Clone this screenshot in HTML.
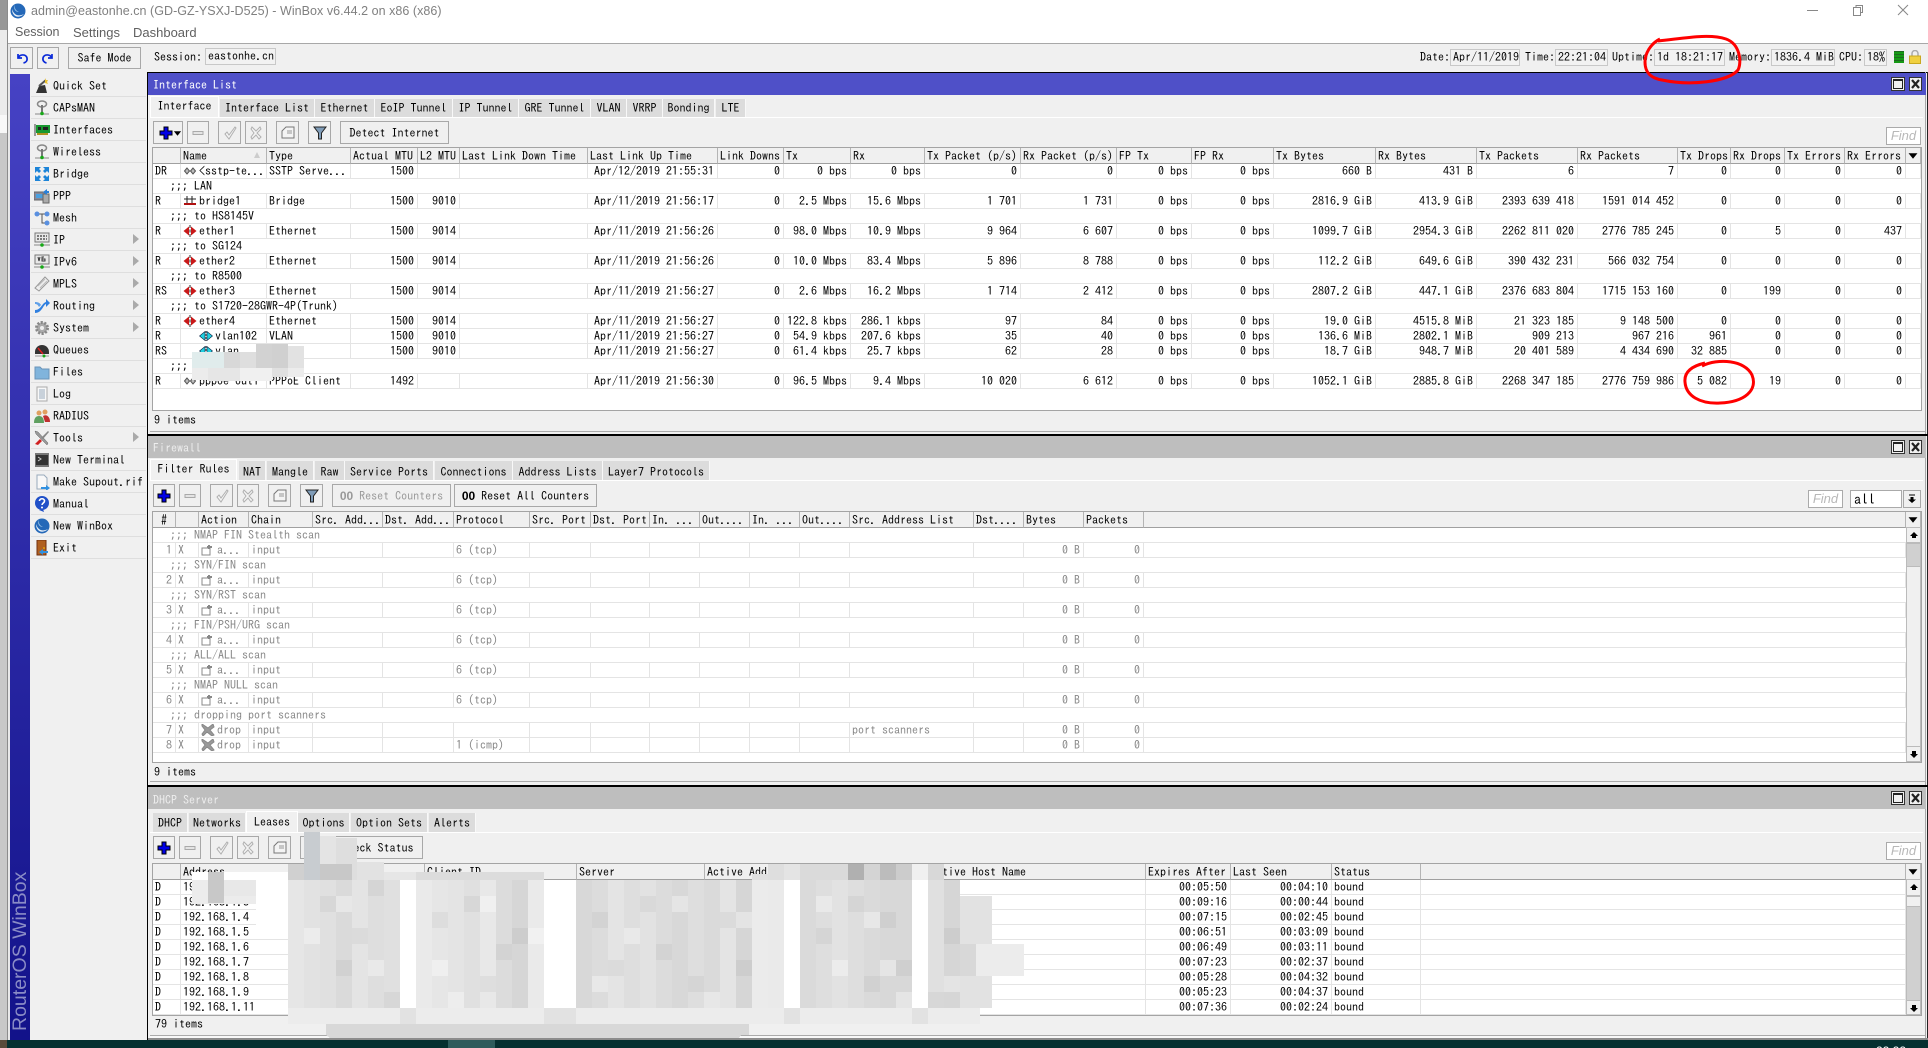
<!DOCTYPE html>
<html><head><meta charset="utf-8"><title>WinBox</title>
<style>
html,body{margin:0;padding:0;width:1928px;height:1048px;overflow:hidden}
body{position:relative;background:#053030;font:12px/14px IPAGothic,"Liberation Mono",monospace;color:#000}
#root{position:absolute;left:0;top:0;width:1928px;height:1048px;overflow:hidden}
div,span.a,svg.a{position:absolute}
.a{position:absolute}
.bg{background:#f0f0f0}
.tt{color:#fff;left:153px;line-height:14px;white-space:pre}
.tb{left:148px;width:1778px;height:22px}
.tab{position:absolute;background:#dcdcdc;height:19px;line-height:19px;text-align:center;white-space:pre;border-right:1px solid #f8f8f8;box-sizing:border-box}
.tab.on{background:#f0f0f0;border:1px solid #fff;border-bottom:0;height:22px;line-height:19px}
.fw .tab{line-height:22px}
.fw .tab.on{line-height:19px}
.dh .tab{line-height:21px}
.dh .tab.on{line-height:20px}
.ln{left:150px;width:1773px;height:1px;background:#fff}
.b{position:absolute;box-sizing:border-box;border:1px solid #a8a8a8;background:#f0f0f0;text-align:center;line-height:23px;white-space:pre;height:23px}
.b svg{position:absolute;left:50%;top:50%;width:14px;height:14px;margin:-7px 0 0 -7px}
.bx{position:absolute;box-sizing:border-box;border:1px solid #c8c8c8;height:17px;line-height:15px;background:#f2f2f2;white-space:pre;padding-left:2px}
.l{position:absolute;white-space:pre;line-height:14px}
.fr{position:absolute;left:152px;width:1770px;box-sizing:border-box;border:1px solid #a4a4a4;background:#fff;overflow:hidden}
table{border-collapse:separate;border-spacing:0;table-layout:fixed;position:absolute;left:0;top:0}
th,td{box-sizing:border-box;padding:0 2px;height:15px;line-height:14px;font-weight:normal;text-align:left;white-space:pre;overflow:hidden;border-right:1px solid #e4e4e4;border-bottom:1px solid #e4e4e4}
th{height:16px;background:#f0f0f0;border-right:1px solid #b4b4b4;border-bottom:1px solid #a0a0a0;position:relative}
td{padding-right:3px}
td.c{text-align:left!important;padding-left:17px;border-right:0}
td svg{width:14px;height:12px;vertical-align:-2px;margin-right:2px}
#t1 td:nth-child(n+4){text-align:right}
#t2 td{color:#888}
#t2 td:nth-child(1),#t2 td:nth-child(16),#t2 td:nth-child(17){text-align:right}
#t3 td:nth-child(9),#t3 td:nth-child(10){text-align:right}
.n2{padding-left:18px}
.find{position:absolute;box-sizing:border-box;border:1px solid #aaa;background:#fff;height:18px;color:#b8b8b8;font:italic 13px/16px "Liberation Sans",sans-serif;text-align:center}
.w{position:absolute;box-sizing:border-box;width:14px;height:14px;border:1px solid #333;background:#f0f0f0}
.w.x{left:1909px;width:13px}
.w.mx{left:1891px}
.w.mx i{position:absolute;left:1px;top:1px;right:1px;bottom:1px;border:1px solid #222;border-top-width:2px}
.w.x svg{position:absolute;left:1px;top:1px;width:9px;height:10px}
.m{position:relative;box-sizing:border-box;width:115px;height:22px;left:1px;border-bottom:1px solid #dedede}
.m svg{position:absolute;left:3px;top:3px;width:16px;height:16px}
.m span{position:absolute;left:22px;top:4px;white-space:pre;line-height:14px}
.m u{position:absolute;left:102px;top:5px;width:0;height:0;border-left:6px solid #aaa;border-top:5px solid transparent;border-bottom:5px solid transparent}
.sb{position:absolute;left:1906px;width:15px;box-sizing:border-box;background:#f0f0f0;border:1px solid #bbb}
.sb svg{position:absolute;left:2px;top:3px;width:10px;height:9px}
</style></head><body><div id="root">
<svg width="0" height="0" style="position:absolute">
<defs>
<symbol id="plus" viewBox="0 0 14 14"><path d="M5 1h4v4h4v4H9v4H5V9H1V5h4z" fill="#0000e6" stroke="#000" stroke-width="1"/></symbol>
<symbol id="minus" viewBox="0 0 14 14"><rect x="2" y="5.5" width="10" height="3" fill="#e4e4e4" stroke="#aaa"/></symbol>
<symbol id="chk" viewBox="0 0 14 14"><path d="M2 8l2-2 2 3 6-8 1 1-7 11z" fill="#f4f4f4" stroke="#b0b0b0"/></symbol>
<symbol id="xx" viewBox="0 0 14 14"><path d="M3 1l4 4 4-4 1 2-4 4 4 4-2 2-3-4-4 4-1-2 3-4-3-4z" fill="#f4f4f4" stroke="#b0b0b0"/></symbol>
<symbol id="note" viewBox="0 0 14 14"><path d="M1 5l4-4h8v11H1z" fill="#f4f4f4" stroke="#777"/><path d="M6 5h5M6 7h5" stroke="#999"/></symbol>
<symbol id="fil" viewBox="0 0 14 14"><path d="M1 1h12L8.500 7v6h-3V7z" fill="#7f9cb8" stroke="#222"/></symbol>
<symbol id="eth" viewBox="0 0 14 12"><path d="M6 1.500L.5 6 6 10.500zM8 1.500L13.500 6 8 10.500z" fill="#c81818"/><path d="M7 0v3M7 4.500v3M7 9v3" stroke="#222"/></symbol>
<symbol id="gry" viewBox="0 0 14 12"><path d="M4 3L1.500 6 4 9l2.500-3zM10 3L7.500 6 10 9l2.500-3z" fill="#bbb" stroke="#555"/></symbol>
<symbol id="vl" viewBox="0 0 14 12"><path d="M6 1.500L.5 6 6 10.500zM8 1.500L13.500 6 8 10.500z" fill="#20d0e0" stroke="#124" stroke-width=".6"/><path d="M7 1v10" stroke="#444" stroke-dasharray="2 1"/></symbol>
<symbol id="br" viewBox="0 0 14 12"><path d="M1 4h12M4 1v7M9 1v7" stroke="#222" fill="none"/><path d="M1 9h12" stroke="#b01010" stroke-width="2"/></symbol>
<symbol id="acc" viewBox="0 0 14 12"><path d="M1 4h8v7H1z" fill="#fff" stroke="#888"/><path d="M8 5V1M6 3h5" stroke="#888" stroke-width="2"/></symbol>
<symbol id="drp" viewBox="0 0 14 12"><path d="M1 0l6 4 5-4 1 3-4 3 4 5-2 1-5-4-4 4-1-2 3-4-3-4z" fill="#999" stroke="#888"/></symbol>
<symbol id="qs" viewBox="0 0 16 16"><path d="M2 15l3-7 6-1 2 8z" fill="#333"/><path d="M5 8l7-6" stroke="#555" stroke-width="2"/><path d="M11 0l1 2 2 0-1 2 1 2-3-1z" fill="#e8c030"/></symbol>
<symbol id="ant" viewBox="0 0 16 16"><ellipse cx="8" cy="4" rx="4.500" ry="3" fill="none" stroke="#888" stroke-width="1.500"/><path d="M8 5v7" stroke="#777" stroke-width="2"/><path d="M1 14h14" stroke="#888"/><circle cx="8" cy="13.500" r="1.800" fill="#18a818"/></symbol>
<symbol id="if" viewBox="0 0 16 16"><rect x="0" y="2" width="2" height="12" fill="#999"/><rect x="2" y="3" width="14" height="8" fill="#189830"/><path d="M4 5h3v3H4zM9 5h5v3H9z" fill="#222"/><path d="M3 11h11v2H3z" fill="#b09020"/></symbol>
<symbol id="brg" viewBox="0 0 16 16"><path d="M1 1h6L5 3l2 2-2 2-2-2-2 2zM15 1H9l2 2-2 2 2 2 2-2 2 2zM1 15h6l-2-2 2-2-2-2-2 2-2-2zM15 15H9l2-2-2-2 2-2 2 2 2-2z" fill="#1c84d8"/></symbol>
<symbol id="ppp" viewBox="0 0 16 16"><rect x="0" y="4" width="11" height="8" fill="#889" stroke="#666"/><rect x="2" y="6" width="7" height="4" fill="#4aa0e0"/><rect x="9" y="6" width="6" height="9" fill="#aaa" stroke="#666"/><path d="M9 4l4-3v2h2v2h-2v2z" fill="#2a80d8"/></symbol>
<symbol id="mesh" viewBox="0 0 16 16"><path d="M3 4h9M8 4v9h4" stroke="#555" fill="none"/><circle cx="3" cy="4" r="2.500" fill="#5a90e0"/><circle cx="13" cy="4" r="2.500" fill="#5a90e0"/><circle cx="13" cy="13" r="2.500" fill="#5a90e0"/></symbol>
<symbol id="ip" viewBox="0 0 16 16"><rect x="1" y="1" width="14" height="9" fill="#e8e8e8" stroke="#777"/><path d="M3 4h10M3 7h10" stroke="#555" stroke-width="1.500" stroke-dasharray="2 1"/><path d="M0 13h16" stroke="#888"/><circle cx="8" cy="13" r="1.800" fill="#18a818"/></symbol>
<symbol id="ip6" viewBox="0 0 16 16"><rect x="1" y="1" width="14" height="9" fill="#e8e8e8" stroke="#777"/><path d="M4 3l1 4 1-4M10 3H8v4h3V5H8" stroke="#333" fill="none"/><path d="M0 13h16" stroke="#888"/><circle cx="8" cy="13" r="1.800" fill="#18a818"/></symbol>
<symbol id="mpls" viewBox="0 0 16 16"><path d="M1 12L11 1l4 4L5 15z" fill="#eee" stroke="#999"/><path d="M4 10l7-7M6 12l7-7" stroke="#bbb"/></symbol>
<symbol id="rt" viewBox="0 0 16 16"><path d="M1 12c6 0 7-7 11-8V1l4 4-4 4V6c-3 1-4 9-11 9z" fill="#3080e0"/><path d="M1 4c3 0 5 1 6 3l-2 2C4 7 3 6 1 6z" fill="#60a0e8"/></symbol>
<symbol id="sys" viewBox="0 0 16 16"><circle cx="8" cy="8" r="5.500" fill="#aaa" stroke="#888" stroke-width="3" stroke-dasharray="2 1.500"/><circle cx="8" cy="8" r="2" fill="#eee"/></symbol>
<symbol id="q" viewBox="0 0 16 16"><path d="M1 10a7 7 0 0 1 14 0v2H1z" fill="#333"/><path d="M4 6l5 6" stroke="#e02020" stroke-width="1.500"/><path d="M1 14h14" stroke="#999"/><circle cx="10" cy="14" r="1.500" fill="#18a818"/></symbol>
<symbol id="f" viewBox="0 0 16 16"><path d="M1 3h5l2 2h7v10H1z" fill="#80b4dc" stroke="#6a94b8"/></symbol>
<symbol id="log" viewBox="0 0 16 16"><rect x="3" y="1" width="10" height="14" fill="#f8f8f8" stroke="#aaa"/><path d="M5 4h6M5 6h6M5 8h6M5 10h6M5 12h6" stroke="#9ab"/></symbol>
<symbol id="rad" viewBox="0 0 16 16"><circle cx="5" cy="5" r="2.500" fill="#e0a060"/><circle cx="11" cy="4" r="2.500" fill="#e0a060"/><path d="M0 15c0-5 2-7 5-7s5 2 5 7z" fill="#60a060"/><path d="M9 8c3-2 7 0 7 6h-5z" fill="#c03030"/></symbol>
<symbol id="tl" viewBox="0 0 16 16"><path d="M1 1l3 1 10 11-1 2L2 4z" fill="#999" stroke="#666" stroke-width=".5"/><path d="M14 1l1 1-6 7-2-1z" fill="#888"/><path d="M6 9l2 2-4 4-3-1z" fill="#d02020"/></symbol>
<symbol id="term" viewBox="0 0 16 16"><rect x="1" y="1" width="14" height="14" fill="#777"/><rect x="2" y="3" width="12" height="10" fill="#333"/><path d="M4 5l3 2-3 2" stroke="#ccc" fill="none"/></symbol>
<symbol id="sup" viewBox="0 0 16 16"><path d="M3 1h7l3 3v11H3z" fill="#f8f8f8" stroke="#9ab"/><path d="M7 13h5v-2l4 3-4 3v-2H7z" fill="#3090e0"/></symbol>
<symbol id="man" viewBox="0 0 16 16"><circle cx="8" cy="7" r="7" fill="#2050c8"/><path d="M5 14l5 2-1-3z" fill="#2050c8"/><path d="M5.500 5c0-3 5-3 5 0 0 2-2.500 2-2.500 4" stroke="#fff" stroke-width="1.600" fill="none"/><circle cx="8" cy="11.500" r="1" fill="#fff"/></symbol>
<symbol id="nw" viewBox="0 0 16 16"><circle cx="8" cy="8" r="7.500" fill="#2468b8"/><path d="M2 6c2 6 6 8 12 5-5 5-12 3-12-5z" fill="#e8f0f8"/><path d="M5 2c-1 3 1 6 4 7-4 0-6-4-4-7z" fill="#a0c8e8"/></symbol>
<symbol id="ex" viewBox="0 0 16 16"><rect x="3" y="0" width="9" height="15" fill="#b06020" stroke="#703010"/><circle cx="10" cy="8" r=".8" fill="#fc0"/><path d="M14 11H9V9l-4 3 4 3v-2h5z" fill="#3090e0"/></symbol>
<symbol id="up" viewBox="0 0 10 9"><path d="M5 1l4 4H7v2H3V5H1z" fill="#000"/></symbol>
<symbol id="dn" viewBox="0 0 10 9"><path d="M3 1h4v3h2L5 8 1 4h2z" fill="#000"/></symbol>
<symbol id="tri" viewBox="0 0 10 9"><path d="M1 2h8L5 7z" fill="#000"/></symbol>
<symbol id="cl" viewBox="0 0 9 10"><path d="M1 1l7 8M8 1L1 9" stroke="#222" stroke-width="2.200"/></symbol>
</defs></svg>

<!-- window frame -->
<div style="left:0;top:0;width:8px;height:30px;background:#989898"></div>
<div style="left:0;top:30px;width:8px;height:85px;background:#ebebeb"></div>
<div style="left:0;top:115px;width:8px;height:18px;background:#f8f8f8"></div>
<div style="left:0;top:133px;width:8px;height:907px;background:#c8c8c8"></div>
<div style="left:7px;top:0;width:1px;height:1040px;background:#8c8c8c"></div>
<div style="left:8px;top:0;width:1920px;height:43px;background:#fff"></div>
<div style="left:8px;top:43px;width:1920px;height:1px;background:#a8a8a8"></div>
<div style="left:8px;top:44px;width:1920px;height:996px;background:#f0f0f0"></div>

<svg class="a" style="left:10px;top:3px;width:16px;height:16px" viewBox="0 0 16 16"><use href="#nw"/></svg>
<div style="left:31px;top:4px;font:12.5px/15px 'Liberation Sans',sans-serif;color:#808080;white-space:pre;letter-spacing:.04px">admin@eastonhe.cn (GD-GZ-YSXJ-D525) - WinBox v6.44.2 on x86 (x86)</div>
<div style="left:15px;top:25px;font:12.5px/15px 'Liberation Sans',sans-serif;color:#606060">Session</div>
<div style="left:73px;top:25px;font:13px/15px 'Liberation Sans',sans-serif;color:#606060">Settings</div>
<div style="left:133px;top:25px;font:13px/15px 'Liberation Sans',sans-serif;color:#606060">Dashboard</div>
<svg class="a" style="left:1800px;top:0;width:128px;height:24px" viewBox="0 0 128 24"><path d="M7 10.500h11" stroke="#888"/><path d="M53.500 7.500h7v8h-7zM56 7V5.500h6.500v7H61" fill="none" stroke="#888"/><path d="M98 5l10 10M108 5L98 15" stroke="#888"/></svg>

<!-- toolbar -->
<div class="b" style="left:10px;top:47px;width:23px;height:22px"><svg viewBox="0 0 14 14"><path d="M3 3v4h4M3.500 6.500C5 3 11 3 12 7c.5 2.500-1 4.500-3.500 5" fill="none" stroke="#0a2ad8" stroke-width="1.700"/></svg></div>
<div class="b" style="left:37px;top:47px;width:22px;height:22px"><svg viewBox="0 0 14 14"><path d="M11 3v4H7M10.500 6.500C9 3 3 3 2 7c-.5 2.500 1 4.500 3.500 5" fill="none" stroke="#0a2ad8" stroke-width="1.700"/></svg></div>
<div class="b" style="left:68px;top:47px;width:73px;height:22px;line-height:20px">Safe Mode</div>
<div class="l" style="left:154px;top:50px">Session:</div>
<div class="bx" style="left:205px;top:48px;width:71px;font-size:12px">eastonhe.cn</div>

<div class="l" style="left:1420px;top:50px">Date:</div><div class="bx" style="left:1450px;top:49px;width:70px">Apr/11/2019</div>
<div class="l" style="left:1525px;top:50px">Time:</div><div class="bx" style="left:1555px;top:49px;width:53px">22:21:04</div>
<div class="l" style="left:1612px;top:50px">Uptime:</div><div class="bx" style="left:1654px;top:49px;width:71px">1d 18:21:17</div>
<div class="l" style="left:1729px;top:50px">Memory:</div><div class="bx" style="left:1771px;top:49px;width:64px">1836.4 MiB</div>
<div class="l" style="left:1839px;top:50px">CPU:</div><div class="bx" style="left:1864px;top:49px;width:23px">18%</div>
<div style="left:1894px;top:51px;width:10px;height:12px;background:repeating-linear-gradient(#1e6a1e 0 1px,#159a15 1px 3px)"></div>
<svg class="a" style="left:1909px;top:50px;width:12px;height:14px" viewBox="0 0 12 14"><path d="M3 6V3.500a3 3 0 0 1 6 0V6" fill="none" stroke="#aaa" stroke-width="1.500"/><rect x=".5" y="6" width="11" height="7.500" fill="#f0d040" stroke="#c8a820"/></svg>

<!-- sidebar -->
<div style="left:8px;top:44px;width:2px;height:996px;background:#e8e8e8"></div>
<div style="left:10px;top:74px;width:20px;height:966px;background:linear-gradient(#4642c4,#12128a)"></div>
<div style="left:9px;top:1031px;transform:rotate(-90deg);transform-origin:0 0;font:19.5px/22px 'Liberation Sans',sans-serif;color:#8a8cc6;white-space:pre">RouterOS WinBox</div>
<div style="left:30px;top:75px;width:117px;height:965px">
<div class="m"><svg><use href="#qs"/></svg><span>Quick Set</span></div>
<div class="m"><svg><use href="#ant"/></svg><span>CAPsMAN</span></div>
<div class="m"><svg><use href="#if"/></svg><span>Interfaces</span></div>
<div class="m"><svg><use href="#ant"/></svg><span>Wireless</span></div>
<div class="m"><svg><use href="#brg"/></svg><span>Bridge</span></div>
<div class="m"><svg><use href="#ppp"/></svg><span>PPP</span></div>
<div class="m"><svg><use href="#mesh"/></svg><span>Mesh</span></div>
<div class="m"><svg><use href="#ip"/></svg><span>IP</span><u></u></div>
<div class="m"><svg><use href="#ip6"/></svg><span>IPv6</span><u></u></div>
<div class="m"><svg><use href="#mpls"/></svg><span>MPLS</span><u></u></div>
<div class="m"><svg><use href="#rt"/></svg><span>Routing</span><u></u></div>
<div class="m"><svg><use href="#sys"/></svg><span>System</span><u></u></div>
<div class="m"><svg><use href="#q"/></svg><span>Queues</span></div>
<div class="m"><svg><use href="#f"/></svg><span>Files</span></div>
<div class="m"><svg><use href="#log"/></svg><span>Log</span></div>
<div class="m"><svg><use href="#rad"/></svg><span>RADIUS</span></div>
<div class="m"><svg><use href="#tl"/></svg><span>Tools</span><u></u></div>
<div class="m"><svg><use href="#term"/></svg><span>New Terminal</span></div>
<div class="m"><svg><use href="#sup"/></svg><span>Make Supout.rif</span></div>
<div class="m"><svg><use href="#man"/></svg><span>Manual</span></div>
<div class="m"><svg><use href="#nw"/></svg><span>New WinBox</span></div>
<div class="m"><svg><use href="#ex"/></svg><span>Exit</span></div>
</div>
<div style="left:147px;top:72px;width:1781px;height:1px;background:#000"></div>
<div style="left:147px;top:72px;width:1px;height:968px;background:#000"></div>
<div style="left:1927px;top:72px;width:1px;height:968px;background:#222"></div>
<div style="left:1925px;top:72px;width:1px;height:968px;background:#a8a8a8"></div>

<!-- INTERFACE LIST -->
<div class="tb" style="top:73px;background:#4f50c8"></div>
<div class="a tt" style="top:78px">Interface List</div>
<div class="w mx" style="top:77px"><i></i></div><div class="w x" style="top:77px"><svg><use href="#cl"/></svg></div>
<div class="tab on" style="left:150px;top:96px;width:69px">Interface</div>
<div class="tab" style="left:220px;top:99px;width:95px">Interface List</div>
<div class="tab" style="left:315px;top:99px;width:60px">Ethernet</div>
<div class="tab" style="left:375px;top:99px;width:78px">EoIP Tunnel</div>
<div class="tab" style="left:453px;top:99px;width:66px">IP Tunnel</div>
<div class="tab" style="left:519px;top:99px;width:72px">GRE Tunnel</div>
<div class="tab" style="left:591px;top:99px;width:36px">VLAN</div>
<div class="tab" style="left:627px;top:99px;width:36px">VRRP</div>
<div class="tab" style="left:663px;top:99px;width:52px">Bonding</div>
<div class="tab" style="left:716px;top:99px;width:30px">LTE</div>
<div class="a ln" style="top:117px"></div>
<div class="b" style="left:153px;top:121px;width:30px"><svg style="left:5px;margin:-7px 0 0 0" viewBox="0 0 14 14"><use href="#plus"/></svg><svg style="left:19px;width:9px;height:9px;margin:-4px 0 0 0" viewBox="0 0 10 9"><use href="#tri"/></svg></div>
<div class="b" style="left:187px;top:121px;width:22px"><svg><use href="#minus"/></svg></div>
<div class="b" style="left:218px;top:121px;width:23px"><svg><use href="#chk"/></svg></div>
<div class="b" style="left:245px;top:121px;width:22px"><svg><use href="#xx"/></svg></div>
<div class="b" style="left:276px;top:121px;width:23px"><svg><use href="#note"/></svg></div>
<div class="b" style="left:308px;top:121px;width:23px"><svg><use href="#fil"/></svg></div>
<div class="b" style="left:340px;top:121px;width:109px">Detect Internet</div>
<div class="find" style="left:1886px;top:127px;width:35px">Find</div>

<div class="fr" style="top:147px;height:264px">
<table id="t1" style="width:1768px"><colgroup><col style="width:28px"><col style="width:86px"><col style="width:84px"><col style="width:67px"><col style="width:42px"><col style="width:128px"><col style="width:130px"><col style="width:66px"><col style="width:67px"><col style="width:74px"><col style="width:96px"><col style="width:96px"><col style="width:75px"><col style="width:82px"><col style="width:102px"><col style="width:101px"><col style="width:101px"><col style="width:100px"><col style="width:53px"><col style="width:54px"><col style="width:60px"><col style="width:61px"><col style="width:15px"></colgroup>
<tr><th></th><th>Name<span style="position:absolute;right:6px;top:4px;width:0;height:0;border-left:3px solid transparent;border-right:3px solid transparent;border-bottom:6px solid #ccc"></span></th><th>Type</th><th>Actual MTU</th><th>L2 MTU</th><th>Last Link Down Time</th><th>Last Link Up Time</th><th>Link Downs</th><th>Tx</th><th>Rx</th><th>Tx Packet (p/s)</th><th>Rx Packet (p/s)</th><th>FP Tx</th><th>FP Rx</th><th>Tx Bytes</th><th>Rx Bytes</th><th>Tx Packets</th><th>Rx Packets</th><th>Tx Drops</th><th>Rx Drops</th><th>Tx Errors</th><th>Rx Errors</th><th style="padding:0"><svg style="width:12px;height:10px;margin:2px 0 0 1px;vertical-align:top" viewBox="0 0 10 9"><use href="#tri"/></svg></th></tr>
<tr><td>DR</td><td><svg><use href="#gry"/></svg>&lt;sstp-te...</td><td>SSTP Serve...</td><td>1500</td><td></td><td></td><td>Apr/12/2019 21:55:31</td><td>0</td><td>0 bps</td><td>0 bps</td><td>0</td><td>0</td><td>0 bps</td><td>0 bps</td><td>660 B</td><td>431 B</td><td>6</td><td>7</td><td>0</td><td>0</td><td>0</td><td>0</td><td></td></tr>
<tr><td colspan="23" class="c">;;; LAN</td></tr>
<tr><td>R</td><td><svg><use href="#br"/></svg>bridge1</td><td>Bridge</td><td>1500</td><td>9010</td><td></td><td>Apr/11/2019 21:56:17</td><td>0</td><td>2.5 Mbps</td><td>15.6 Mbps</td><td>1 701</td><td>1 731</td><td>0 bps</td><td>0 bps</td><td>2816.9 GiB</td><td>413.9 GiB</td><td>2393 639 418</td><td>1591 014 452</td><td>0</td><td>0</td><td>0</td><td>0</td><td></td></tr>
<tr><td colspan="23" class="c">;;; to HS8145V</td></tr>
<tr><td>R</td><td><svg><use href="#eth"/></svg>ether1</td><td>Ethernet</td><td>1500</td><td>9014</td><td></td><td>Apr/11/2019 21:56:26</td><td>0</td><td>98.0 Mbps</td><td>10.9 Mbps</td><td>9 964</td><td>6 607</td><td>0 bps</td><td>0 bps</td><td>1099.7 GiB</td><td>2954.3 GiB</td><td>2262 811 020</td><td>2776 785 245</td><td>0</td><td>5</td><td>0</td><td>437</td><td></td></tr>
<tr><td colspan="23" class="c">;;; to SG124</td></tr>
<tr><td>R</td><td><svg><use href="#eth"/></svg>ether2</td><td>Ethernet</td><td>1500</td><td>9014</td><td></td><td>Apr/11/2019 21:56:26</td><td>0</td><td>10.0 Mbps</td><td>83.4 Mbps</td><td>5 896</td><td>8 788</td><td>0 bps</td><td>0 bps</td><td>112.2 GiB</td><td>649.6 GiB</td><td>390 432 231</td><td>566 032 754</td><td>0</td><td>0</td><td>0</td><td>0</td><td></td></tr>
<tr><td colspan="23" class="c">;;; to R8500</td></tr>
<tr><td>RS</td><td><svg><use href="#eth"/></svg>ether3</td><td>Ethernet</td><td>1500</td><td>9014</td><td></td><td>Apr/11/2019 21:56:27</td><td>0</td><td>2.6 Mbps</td><td>16.2 Mbps</td><td>1 714</td><td>2 412</td><td>0 bps</td><td>0 bps</td><td>2807.2 GiB</td><td>447.1 GiB</td><td>2376 683 804</td><td>1715 153 160</td><td>0</td><td>199</td><td>0</td><td>0</td><td></td></tr>
<tr><td colspan="23" class="c">;;; to S1720-28GWR-4P(Trunk)</td></tr>
<tr><td>R</td><td><svg><use href="#eth"/></svg>ether4</td><td>Ethernet</td><td>1500</td><td>9014</td><td></td><td>Apr/11/2019 21:56:27</td><td>0</td><td>122.8 kbps</td><td>286.1 kbps</td><td>97</td><td>84</td><td>0 bps</td><td>0 bps</td><td>19.0 GiB</td><td>4515.8 MiB</td><td>21 323 185</td><td>9 148 500</td><td>0</td><td>0</td><td>0</td><td>0</td><td></td></tr>
<tr><td>R</td><td class="n2"><svg><use href="#vl"/></svg>vlan102</td><td>VLAN</td><td>1500</td><td>9010</td><td></td><td>Apr/11/2019 21:56:27</td><td>0</td><td>54.9 kbps</td><td>207.6 kbps</td><td>35</td><td>40</td><td>0 bps</td><td>0 bps</td><td>136.6 MiB</td><td>2802.1 MiB</td><td>909 213</td><td>967 216</td><td>961</td><td>0</td><td>0</td><td>0</td><td></td></tr>
<tr><td>RS</td><td class="n2"><svg><use href="#vl"/></svg>vlan</td><td>VLAN</td><td>1500</td><td>9010</td><td></td><td>Apr/11/2019 21:56:27</td><td>0</td><td>61.4 kbps</td><td>25.7 kbps</td><td>62</td><td>28</td><td>0 bps</td><td>0 bps</td><td>18.7 GiB</td><td>948.7 MiB</td><td>20 401 589</td><td>4 434 690</td><td>32 885</td><td>0</td><td>0</td><td>0</td><td></td></tr>
<tr><td colspan="23" class="c">;;;</td></tr>
<tr><td>R</td><td><svg><use href="#gry"/></svg>pppoe-out1</td><td>PPPoE Client</td><td>1492</td><td></td><td></td><td>Apr/11/2019 21:56:30</td><td>0</td><td>96.5 Mbps</td><td>9.4 Mbps</td><td>10 020</td><td>6 612</td><td>0 bps</td><td>0 bps</td><td>1052.1 GiB</td><td>2885.8 GiB</td><td>2268 347 185</td><td>2776 759 986</td><td>5 082</td><td>19</td><td>0</td><td>0</td><td></td></tr>
</table></div>
<div class="l" style="left:154px;top:413px">9 items</div>
<div style="left:150px;top:431px;width:1775px;height:1px;background:#aaa"></div>

<!-- FIREWALL -->
<div style="left:148px;top:434px;width:1780px;height:2px;background:#000"></div>
<div class="tb" style="top:436px;background:#bebebe"></div>
<div class="a tt" style="top:441px;color:#eee">Firewall</div>
<div class="w mx" style="top:440px"><i></i></div><div class="w x" style="top:440px"><svg><use href="#cl"/></svg></div>
<div class="fw">
<div class="tab on" style="left:150px;top:459px;width:87px">Filter Rules</div>
<div class="tab" style="left:239px;top:461px;width:27px">NAT</div>
<div class="tab" style="left:267px;top:461px;width:47px">Mangle</div>
<div class="tab" style="left:315px;top:461px;width:30px">Raw</div>
<div class="tab" style="left:345px;top:461px;width:89px">Service Ports</div>
<div class="tab" style="left:435px;top:461px;width:78px">Connections</div>
<div class="tab" style="left:513px;top:461px;width:90px">Address Lists</div>
<div class="tab" style="left:603px;top:461px;width:107px">Layer7 Protocols</div>
</div>
<div class="a ln" style="top:480px"></div>
<div class="b" style="left:153px;top:484px;width:22px"><svg><use href="#plus"/></svg></div>
<div class="b" style="left:179px;top:484px;width:22px"><svg><use href="#minus"/></svg></div>
<div class="b" style="left:210px;top:484px;width:23px"><svg><use href="#chk"/></svg></div>
<div class="b" style="left:237px;top:484px;width:22px"><svg><use href="#xx"/></svg></div>
<div class="b" style="left:268px;top:484px;width:23px"><svg><use href="#note"/></svg></div>
<div class="b" style="left:300px;top:484px;width:23px"><svg><use href="#fil"/></svg></div>
<div class="b" style="left:332px;top:484px;width:119px;color:#999"><b style="font:bold 12px 'Liberation Sans',sans-serif">00</b> Reset Counters</div>
<div class="b" style="left:454px;top:484px;width:143px"><b style="font:bold 12px 'Liberation Sans',sans-serif">00</b> Reset All Counters</div>
<div class="find" style="left:1808px;top:490px;width:35px">Find</div>
<div style="left:1850px;top:490px;width:52px;height:18px;box-sizing:border-box;border:1px solid #aaa;background:#fff;padding-left:3px;line-height:16px;font-size:14px">all</div>
<div class="b" style="left:1903px;top:490px;width:18px;height:18px"><svg style="width:10px;height:10px;margin:-5px 0 0 -5px" viewBox="0 0 10 10"><path d="M2 1h6" stroke="#000"/><path d="M3.500 3h3v2.500H9L5 9 1 5.500h2.500z" fill="#000"/></svg></div>

<div class="fr" style="top:511px;height:252px">
<table id="t2" style="width:1768px"><colgroup><col style="width:23px"><col style="width:23px"><col style="width:50px"><col style="width:64px"><col style="width:70px"><col style="width:71px"><col style="width:76px"><col style="width:61px"><col style="width:59px"><col style="width:50px"><col style="width:50px"><col style="width:50px"><col style="width:50px"><col style="width:124px"><col style="width:50px"><col style="width:60px"><col style="width:60px"><col style="width:762px"><col style="width:15px"></colgroup>
<tr><th style="text-align:center">#</th><th></th><th>Action</th><th>Chain</th><th>Src. Add...</th><th>Dst. Add...</th><th>Protocol</th><th>Src. Port</th><th>Dst. Port</th><th>In. ...</th><th>Out....</th><th>In. ...</th><th>Out....</th><th>Src. Address List</th><th>Dst....</th><th>Bytes</th><th>Packets</th><th></th><th style="padding:0"><svg style="width:12px;height:10px;margin:2px 0 0 1px;vertical-align:top" viewBox="0 0 10 9"><use href="#tri"/></svg></th></tr>
<tr><td colspan="19" class="c">;;; NMAP FIN Stealth scan</td></tr>
<tr><td>1</td><td>X</td><td><svg><use href="#acc"/></svg>a...</td><td>input</td><td></td><td></td><td>6 (tcp)</td><td></td><td></td><td></td><td></td><td></td><td></td><td></td><td></td><td>0 B</td><td>0</td><td></td><td></td></tr>
<tr><td colspan="19" class="c">;;; SYN/FIN scan</td></tr>
<tr><td>2</td><td>X</td><td><svg><use href="#acc"/></svg>a...</td><td>input</td><td></td><td></td><td>6 (tcp)</td><td></td><td></td><td></td><td></td><td></td><td></td><td></td><td></td><td>0 B</td><td>0</td><td></td><td></td></tr>
<tr><td colspan="19" class="c">;;; SYN/RST scan</td></tr>
<tr><td>3</td><td>X</td><td><svg><use href="#acc"/></svg>a...</td><td>input</td><td></td><td></td><td>6 (tcp)</td><td></td><td></td><td></td><td></td><td></td><td></td><td></td><td></td><td>0 B</td><td>0</td><td></td><td></td></tr>
<tr><td colspan="19" class="c">;;; FIN/PSH/URG scan</td></tr>
<tr><td>4</td><td>X</td><td><svg><use href="#acc"/></svg>a...</td><td>input</td><td></td><td></td><td>6 (tcp)</td><td></td><td></td><td></td><td></td><td></td><td></td><td></td><td></td><td>0 B</td><td>0</td><td></td><td></td></tr>
<tr><td colspan="19" class="c">;;; ALL/ALL scan</td></tr>
<tr><td>5</td><td>X</td><td><svg><use href="#acc"/></svg>a...</td><td>input</td><td></td><td></td><td>6 (tcp)</td><td></td><td></td><td></td><td></td><td></td><td></td><td></td><td></td><td>0 B</td><td>0</td><td></td><td></td></tr>
<tr><td colspan="19" class="c">;;; NMAP NULL scan</td></tr>
<tr><td>6</td><td>X</td><td><svg><use href="#acc"/></svg>a...</td><td>input</td><td></td><td></td><td>6 (tcp)</td><td></td><td></td><td></td><td></td><td></td><td></td><td></td><td></td><td>0 B</td><td>0</td><td></td><td></td></tr>
<tr><td colspan="19" class="c">;;; dropping port scanners</td></tr>
<tr><td>7</td><td>X</td><td><svg><use href="#drp"/></svg>drop</td><td>input</td><td></td><td></td><td></td><td></td><td></td><td></td><td></td><td></td><td></td><td>port scanners</td><td></td><td>0 B</td><td>0</td><td></td><td></td></tr>
<tr><td>8</td><td>X</td><td><svg><use href="#drp"/></svg>drop</td><td>input</td><td></td><td></td><td>1 (icmp)</td><td></td><td></td><td></td><td></td><td></td><td></td><td></td><td></td><td>0 B</td><td>0</td><td></td><td></td></tr>
</table></div>
<div class="sb" style="top:527px;height:235px"></div>
<div class="sb" style="top:527px;height:16px"><svg><use href="#up"/></svg></div>
<div class="sb" style="top:543px;height:24px;background:#d0d0d0"></div>
<div class="sb" style="top:746px;height:16px"><svg><use href="#dn"/></svg></div>
<div class="l" style="left:154px;top:765px">9 items</div>
<div style="left:150px;top:781px;width:1775px;height:1px;background:#aaa"></div>

<!-- DHCP -->
<div style="left:148px;top:785px;width:1780px;height:2px;background:#000"></div>
<div class="tb" style="top:787px;background:#bebebe"></div>
<div class="a tt" style="top:793px;color:#eee">DHCP Server</div>
<div class="w mx" style="top:791px"><i></i></div><div class="w x" style="top:791px"><svg><use href="#cl"/></svg></div>
<div class="dh">
<div class="tab" style="left:153px;top:813px;width:35px">DHCP</div>
<div class="tab" style="left:189px;top:813px;width:57px">Networks</div>
<div class="tab on" style="left:246px;top:811px;width:52px">Leases</div>
<div class="tab" style="left:298px;top:813px;width:52px">Options</div>
<div class="tab" style="left:351px;top:813px;width:77px">Option Sets</div>
<div class="tab" style="left:429px;top:813px;width:47px">Alerts</div>
</div>
<div class="a ln" style="top:832px"></div>
<div class="b" style="left:153px;top:836px;width:22px"><svg><use href="#plus"/></svg></div>
<div class="b" style="left:179px;top:836px;width:22px"><svg><use href="#minus"/></svg></div>
<div class="b" style="left:210px;top:836px;width:23px"><svg><use href="#chk"/></svg></div>
<div class="b" style="left:237px;top:836px;width:22px"><svg><use href="#xx"/></svg></div>
<div class="b" style="left:268px;top:836px;width:23px"><svg><use href="#note"/></svg></div>
<div class="b" style="left:300px;top:836px;width:23px"><svg><use href="#fil"/></svg></div>
<div class="b" style="left:332px;top:836px;width:91px">Check Status</div>
<div class="find" style="left:1886px;top:842px;width:35px">Find</div>

<div class="fr" style="top:863px;height:153px">
<table id="t3" style="width:1768px"><colgroup><col style="width:28px"><col style="width:116px"><col style="width:128px"><col style="width:152px"><col style="width:128px"><col style="width:98px"><col style="width:125px"><col style="width:218px"><col style="width:85px"><col style="width:101px"><col style="width:89px"><col style="width:485px"><col style="width:15px"></colgroup>
<tr><th></th><th>Address</th><th>MAC Address</th><th>Client ID</th><th>Server</th><th>Active Address</th><th>Active MAC</th><th>Active Host Name</th><th>Expires After</th><th>Last Seen</th><th>Status</th><th></th><th style="padding:0"><svg style="width:12px;height:10px;margin:2px 0 0 1px;vertical-align:top" viewBox="0 0 10 9"><use href="#tri"/></svg></th></tr>
<tr><td>D</td><td>192.168.1.2</td><td></td><td></td><td></td><td></td><td></td><td></td><td>00:05:50</td><td>00:04:10</td><td>bound</td><td></td><td></td></tr>
<tr><td>D</td><td>192.168.1.3</td><td></td><td></td><td></td><td></td><td></td><td></td><td>00:09:16</td><td>00:00:44</td><td>bound</td><td></td><td></td></tr>
<tr><td>D</td><td>192.168.1.4</td><td></td><td></td><td></td><td></td><td></td><td></td><td>00:07:15</td><td>00:02:45</td><td>bound</td><td></td><td></td></tr>
<tr><td>D</td><td>192.168.1.5</td><td></td><td></td><td></td><td></td><td></td><td></td><td>00:06:51</td><td>00:03:09</td><td>bound</td><td></td><td></td></tr>
<tr><td>D</td><td>192.168.1.6</td><td></td><td></td><td></td><td></td><td></td><td></td><td>00:06:49</td><td>00:03:11</td><td>bound</td><td></td><td></td></tr>
<tr><td>D</td><td>192.168.1.7</td><td></td><td></td><td></td><td></td><td></td><td></td><td>00:07:23</td><td>00:02:37</td><td>bound</td><td></td><td></td></tr>
<tr><td>D</td><td>192.168.1.8</td><td></td><td></td><td></td><td></td><td></td><td></td><td>00:05:28</td><td>00:04:32</td><td>bound</td><td></td><td></td></tr>
<tr><td>D</td><td>192.168.1.9</td><td></td><td></td><td></td><td></td><td></td><td></td><td>00:05:23</td><td>00:04:37</td><td>bound</td><td></td><td></td></tr>
<tr><td>D</td><td>192.168.1.11</td><td></td><td></td><td></td><td></td><td></td><td></td><td>00:07:36</td><td>00:02:24</td><td>bound</td><td></td><td></td></tr>
</table></div>
<div class="sb" style="top:879px;height:136px;background:#d0d0d0"></div>
<div class="sb" style="top:879px;height:17px"><svg><use href="#up"/></svg></div>
<div class="sb" style="top:896px;height:11px"></div>
<div class="sb" style="top:1000px;height:15px"><svg><use href="#dn"/></svg></div>
<div class="l" style="left:155px;top:1017px">79 items</div>
<div style="left:150px;top:1035px;width:1775px;height:1px;background:#aaa"></div>
<div style="left:150px;top:1036px;width:1775px;height:2px;background:#f8f8f8"></div>
<div style="left:148px;top:1038px;width:1780px;height:2px;background:#8c8c8c"></div>

<!-- bottom desktop -->
<div style="left:0;top:1040px;width:1928px;height:8px;background:#053030"></div>
<div style="left:0;top:1040px;width:7px;height:8px;background:#5a4a3a"></div>
<div style="left:448px;top:1040px;width:47px;height:8px;background:#2e5c5c"></div>
<div style="left:1876px;top:1044px;font:12px/14px 'Liberation Sans',sans-serif;color:#fff;white-space:pre">22:22</div>

<!-- blurred patches -->
<svg class="a" style="left:0;top:0;width:1928px;height:1048px;pointer-events:none" viewBox="0 0 1928 1048" shape-rendering="crispEdges">
<!-- interface patch -->
<path d="M200 352h104v24h-104z" fill="#f0f0f0"/>
<rect x="192" y="352" width="32" height="16" fill="#e0ecec"/><rect x="224" y="352" width="16" height="16" fill="#d8d8d8"/><rect x="240" y="352" width="16" height="16" fill="#dedede"/><rect x="256" y="344" width="16" height="24" fill="#d2d2d2"/><rect x="272" y="344" width="16" height="24" fill="#d0d0d0"/><rect x="288" y="346" width="16" height="22" fill="#e2e2e2"/>
<rect x="192" y="368" width="16" height="12" fill="#ececec"/><rect x="208" y="368" width="32" height="13" fill="#e6e6e6"/><rect x="240" y="368" width="32" height="13" fill="#f0f0f0"/><rect x="272" y="368" width="16" height="9" fill="#e0e0e0"/><rect x="288" y="368" width="16" height="9" fill="#ececec"/>
<!-- dhcp patch -->
<path d="M192 872h64v32h-64zM256 872h32v56h-32z" fill="#fff"/>
<rect x="192" y="880" width="64" height="24" fill="#ececec"/><rect x="208" y="872" width="16" height="31" fill="#c8c8c8"/><rect x="224" y="880" width="32" height="16" fill="#e8e8e8"/>
<rect x="304" y="832" width="16" height="48" fill="#c8ccd0"/><rect x="320" y="836" width="16" height="44" fill="#e4e4e4"/><rect x="336" y="838" width="21" height="42" fill="#dedede"/><rect x="357" y="862" width="27" height="18" fill="#e2e2e2"/>
<rect x="288" y="864" width="16" height="16" fill="#d0d0d0"/><rect x="320" y="864" width="32" height="16" fill="#c8c8c8"/><rect x="384" y="872" width="32" height="8" fill="#e6e6e6"/><rect x="416" y="872" width="128" height="8" fill="#dcdcdc"/>
<rect x="752" y="874" width="16" height="6" fill="#e0e0e0"/><rect x="768" y="864" width="16" height="16" fill="#dedede"/><rect x="784" y="864" width="16" height="16" fill="#e4e4e4"/><rect x="800" y="864" width="48" height="16" fill="#dadada"/><rect x="848" y="864" width="16" height="16" fill="#b0b0b0"/><rect x="864" y="864" width="16" height="16" fill="#d4d4d4"/><rect x="880" y="864" width="16" height="16" fill="#bcbcbc"/><rect x="896" y="864" width="16" height="16" fill="#cccccc"/><rect x="912" y="864" width="16" height="16" fill="#f0f0f0"/><rect x="928" y="864" width="16" height="16" fill="#d8d8d8"/>
<g>
<rect x="288" y="880" width="16" height="128" fill="#e6e6e6"/><rect x="304" y="880" width="16" height="128" fill="#e2e2e2"/><rect x="320" y="880" width="16" height="128" fill="#e0e0e0"/><rect x="336" y="880" width="16" height="128" fill="#dadada"/><rect x="352" y="880" width="16" height="128" fill="#e4e4e4"/><rect x="368" y="880" width="16" height="128" fill="#dedede"/><rect x="384" y="880" width="16" height="128" fill="#e0e0e0"/><rect x="400" y="880" width="16" height="128" fill="#fff"/><rect x="416" y="880" width="16" height="128" fill="#eaeaea"/><rect x="432" y="880" width="16" height="128" fill="#e6e6e6"/><rect x="448" y="880" width="16" height="128" fill="#e4e4e4"/><rect x="464" y="880" width="16" height="128" fill="#e0e0e0"/><rect x="480" y="880" width="16" height="128" fill="#e8e8e8"/><rect x="496" y="880" width="16" height="128" fill="#dcdcdc"/><rect x="512" y="880" width="16" height="128" fill="#d6d6d6"/><rect x="528" y="880" width="16" height="128" fill="#eaeaea"/><rect x="544" y="880" width="32" height="128" fill="#fff"/><rect x="576" y="880" width="16" height="128" fill="#d8d8d8"/><rect x="592" y="880" width="16" height="128" fill="#dcdcdc"/><rect x="608" y="880" width="16" height="128" fill="#e4e4e4"/><rect x="624" y="880" width="16" height="128" fill="#dedede"/><rect x="640" y="880" width="16" height="128" fill="#e2e2e2"/><rect x="656" y="880" width="16" height="128" fill="#dcdcdc"/><rect x="672" y="880" width="16" height="128" fill="#d8d8d8"/><rect x="688" y="880" width="16" height="128" fill="#dedede"/><rect x="704" y="880" width="16" height="128" fill="#dadada"/><rect x="720" y="880" width="16" height="128" fill="#e4e4e4"/><rect x="736" y="880" width="16" height="128" fill="#d6d6d6"/><rect x="752" y="880" width="16" height="128" fill="#ebebeb"/><rect x="768" y="880" width="16" height="128" fill="#eaeaea"/><rect x="784" y="880" width="16" height="128" fill="#fff"/><rect x="800" y="880" width="16" height="128" fill="#dadada"/><rect x="816" y="880" width="16" height="128" fill="#dedede"/><rect x="832" y="880" width="16" height="128" fill="#e2e2e2"/><rect x="848" y="880" width="16" height="128" fill="#dedede"/><rect x="864" y="880" width="16" height="128" fill="#dadada"/><rect x="880" y="880" width="16" height="128" fill="#d8d8d8"/><rect x="896" y="880" width="16" height="128" fill="#d8d8d8"/><rect x="912" y="880" width="16" height="128" fill="#fff"/><rect x="928" y="880" width="16" height="128" fill="#e0e0e0"/><rect x="944" y="880" width="16" height="128" fill="#d6d6d6"/>
<path d="M960 896h32v48h-32zM960 976h32v32h-32z" fill="#e2e2e2"/><rect x="976" y="944" width="48" height="32" fill="#ececec"/><rect x="960" y="944" width="16" height="32" fill="#d8d8d8"/>
</g>
<path fill="#000" fill-opacity=".04" d="M320 896h16v16h-16zM352 928h16v16h-16zM368 880h16v16h-16zM336 960h16v16h-16zM384 992h16v16h-16zM432 912h16v16h-16zM464 896h16v16h-16zM496 944h16v16h-16zM512 928h16v16h-16zM480 976h16v16h-16zM592 912h16v16h-16zM608 960h16v16h-16zM640 896h16v16h-16zM656 944h16v16h-16zM688 976h16v16h-16zM720 912h16v16h-16zM736 960h16v16h-16zM816 928h16v16h-16zM848 896h16v16h-16zM864 976h16v16h-16zM880 912h16v16h-16zM896 960h16v16h-16zM944 928h16v16h-16zM928 992h16v16h-16z"/>
<path fill="#fff" fill-opacity=".35" d="M304 928h16v16h-16zM368 960h16v16h-16zM336 896h16v16h-16zM432 960h16v16h-16zM480 896h16v16h-16zM528 928h16v16h-16zM448 992h16v16h-16zM592 976h16v16h-16zM624 928h16v16h-16zM672 896h16v16h-16zM704 992h16v16h-16zM736 912h16v16h-16zM816 896h16v16h-16zM864 912h16v16h-16zM832 960h16v16h-16zM880 960h16v16h-16zM896 992h16v16h-16zM944 976h16v16h-16z"/>
<path fill="#ececec" d="M288 1008h692v16H288z"/>
<path fill="#d8d8d8" d="M326 1024h423v11h-8l-2 3H330l-4-3z"/>
<path fill="#e2e2e2" d="M400 1008h16v16h-16zM544 1008h32v16h-32zM784 1008h16v16h-16zM912 1008h16v16h-16z"/>
</svg>

<!-- red marks -->
<svg class="a" style="left:0;top:0;width:1928px;height:1048px;pointer-events:none" viewBox="0 0 1928 1048">
<path d="M1658 41C1680 39 1708 33 1726 39 1740 44 1742 62 1738 70 1728 82 1690 86 1662 80 1650 78 1645 72 1645 62 1645 54 1650 44 1660 39" fill="none" stroke="#f00" stroke-width="3"/>
<path d="M1702 366C1718 358 1745 360 1752 375 1758 390 1745 402 1720 403 1700 404 1686 396 1685 382 1684 372 1692 366 1705 363" fill="none" stroke="#f00" stroke-width="3"/>
</svg>
</div></body></html>
